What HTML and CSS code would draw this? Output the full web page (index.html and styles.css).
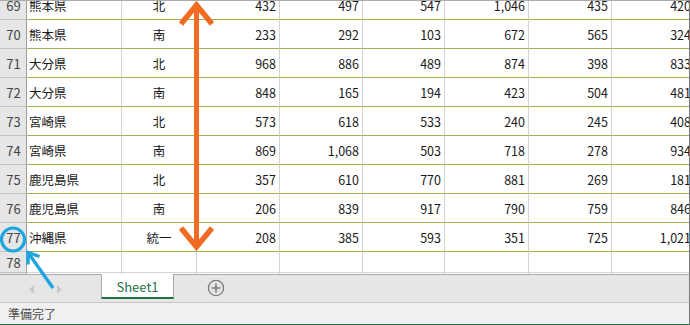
FILE: index.html
```html
<!DOCTYPE html>
<html lang="ja">
<head>
<meta charset="utf-8">
<title>Sheet</title>
<link rel="stylesheet" href="styles.css">
</head>
<body>
<div class="app">
  <div class="sheet">
    <div class="grid">
      <div class="row"><div class="rh">69</div><div class="c name">熊本県</div><div class="c reg">北</div><div class="c num">432</div><div class="c num">497</div><div class="c num">547</div><div class="c num">1,046</div><div class="c num">435</div><div class="c num">420</div></div>
      <div class="row"><div class="rh">70</div><div class="c name">熊本県</div><div class="c reg">南</div><div class="c num">233</div><div class="c num">292</div><div class="c num">103</div><div class="c num">672</div><div class="c num">565</div><div class="c num">324</div></div>
      <div class="row"><div class="rh">71</div><div class="c name">大分県</div><div class="c reg">北</div><div class="c num">968</div><div class="c num">886</div><div class="c num">489</div><div class="c num">874</div><div class="c num">398</div><div class="c num">833</div></div>
      <div class="row"><div class="rh">72</div><div class="c name">大分県</div><div class="c reg">南</div><div class="c num">848</div><div class="c num">165</div><div class="c num">194</div><div class="c num">423</div><div class="c num">504</div><div class="c num">481</div></div>
      <div class="row"><div class="rh">73</div><div class="c name">宮崎県</div><div class="c reg">北</div><div class="c num">573</div><div class="c num">618</div><div class="c num">533</div><div class="c num">240</div><div class="c num">245</div><div class="c num">408</div></div>
      <div class="row"><div class="rh">74</div><div class="c name">宮崎県</div><div class="c reg">南</div><div class="c num">869</div><div class="c num">1,068</div><div class="c num">503</div><div class="c num">718</div><div class="c num">278</div><div class="c num">934</div></div>
      <div class="row"><div class="rh">75</div><div class="c name">鹿児島県</div><div class="c reg">北</div><div class="c num">357</div><div class="c num">610</div><div class="c num">770</div><div class="c num">881</div><div class="c num">269</div><div class="c num">181</div></div>
      <div class="row"><div class="rh">76</div><div class="c name">鹿児島県</div><div class="c reg">南</div><div class="c num">206</div><div class="c num">839</div><div class="c num">917</div><div class="c num">790</div><div class="c num">759</div><div class="c num">846</div></div>
      <div class="row"><div class="rh">77</div><div class="c name">沖縄県</div><div class="c reg">統一</div><div class="c num">208</div><div class="c num">385</div><div class="c num">593</div><div class="c num">351</div><div class="c num">725</div><div class="c num">1,021</div></div>
      <div class="row short"><div class="rh">78</div><div class="c"></div><div class="c"></div><div class="c"></div><div class="c"></div><div class="c"></div><div class="c"></div><div class="c"></div><div class="c"></div></div>
      <div class="row short"><div class="rh">79</div><div class="c"></div><div class="c"></div><div class="c"></div><div class="c"></div><div class="c"></div><div class="c"></div><div class="c"></div><div class="c"></div></div>
    </div>
  </div>
  <div class="tabbar">
    <div class="nav">
      <svg width="7" height="9" viewBox="0 0 7 9"><polygon points="6,0 1,4.5 6,9" fill="#c8c8c8"/></svg>
      <svg width="7" height="9" viewBox="0 0 7 9"><polygon points="1,0 6,4.5 1,9" fill="#c8c8c8"/></svg>
    </div>
    <div class="tab">Sheet1</div>
    <svg class="add" width="18" height="18" viewBox="0 0 18 18">
      <circle cx="9" cy="9" r="7.6" fill="none" stroke="#7d7d7d" stroke-width="1.4"/>
      <path d="M9 4.6V13.4M4.6 9H13.4" stroke="#7d7d7d" stroke-width="1.6"/>
    </svg>
  </div>
  <div class="status">準備完了</div>
  <svg class="overlay" width="690" height="325" viewBox="0 0 690 325">
    <g stroke="#f26b22" fill="none" stroke-linejoin="miter" stroke-miterlimit="10">
      <line x1="196.5" y1="6" x2="196.5" y2="246" stroke-width="5"/>
      <polyline points="181,24 196.5,5 212,24" stroke-width="5.5"/>
      <polyline points="181,228 196.5,247 212,228" stroke-width="5.5"/>
    </g>
    <g stroke="#1ea5e0" fill="none" stroke-linejoin="miter" stroke-miterlimit="10">
      <circle cx="13" cy="239.5" r="11.5" stroke-width="3.2"/>
      <line x1="29" y1="254" x2="53" y2="288" stroke-width="3.4"/>
      <polyline points="28,264.5 28,252.5 39.5,256.5" stroke-width="3.4"/>
    </g>
  </svg>
</div>
</body>
</html>
```
FILE: styles.css
```css
html, body {
  margin: 0;
  padding: 0;
  background: #ffffff;
}
body {
  width: 690px;
  height: 325px;
  overflow: hidden;
  font-family: "Noto Sans CJK JP", "Noto Sans", sans-serif;
  font-size: 12px;
  color: #1a1a1a;
}
.app {
  position: relative;
  width: 690px;
  height: 325px;
  box-sizing: border-box;
  border-right: 1px solid #7a7a7a;
  border-bottom: 1px solid #217346;
  overflow: hidden;
}
.sheet {
  height: 274px;
  box-sizing: border-box;
  border-top: 1px solid #ababab;
  overflow: hidden;
}
.grid {
  margin-top: -10px;
}
.row {
  display: grid;
  grid-template-columns: 27px 95px 75px 83px 83px 82px 84px 83px 83px;
  height: 29px;
}
.row.short {
  height: 21px;
}
.rh {
  box-sizing: border-box;
  background: #e6e6e6;
  border-right: 1px solid #9f9f9f;
  border-bottom: 1px solid #c3c3c3;
  color: #444444;
  display: flex;
  align-items: center;
  justify-content: center;
  padding-left: 1px;
  font-size: 13px;
}
.c {
  box-sizing: border-box;
  border-right: 1px solid #d4d4d4;
  border-bottom: 1px solid #9bb552;
  display: flex;
  align-items: center;
  white-space: nowrap;
  overflow: hidden;
}
.row.short .c {
  border-bottom-color: #d4d4d4;
}
.name {
  padding-left: 2px;
  font-size: 12.5px;
}
.reg {
  justify-content: center;
  font-size: 12.5px;
}
.num {
  justify-content: flex-end;
  padding-right: 3px;
  font-size: 12.5px;
}
.tabbar {
  height: 29px;
  box-sizing: border-box;
  background: #e6e6e6;
  border-top: 1px solid #a9a9a9;
  border-bottom: 1px solid #c6c6c6;
  display: flex;
  align-items: flex-start;
}
.nav {
  width: 101px;
  height: 27px;
  display: flex;
  align-items: center;
  gap: 21px;
  padding-left: 28px;
  box-sizing: border-box;
  padding-top: 1px;
}
.tab {
  width: 73px;
  height: 25px;
  margin-top: -1px;
  box-sizing: border-box;
  background: #ffffff;
  border-left: 1px solid #ababab;
  border-right: 1px solid #ababab;
  border-bottom: 2px solid #217346;
  color: #217346;
  font-size: 13px;
  display: flex;
  align-items: center;
  justify-content: center;
  padding-top: 2px;
}
.add {
  margin-left: 33px;
  margin-top: 4px;
}
.status {
  height: 21px;
  background: #f0f0f0;
  color: #4a4a4a;
  font-size: 12px;
  display: flex;
  align-items: center;
  padding-left: 8px;
}
.overlay {
  position: absolute;
  left: 0;
  top: 0;
  pointer-events: none;
}
```
